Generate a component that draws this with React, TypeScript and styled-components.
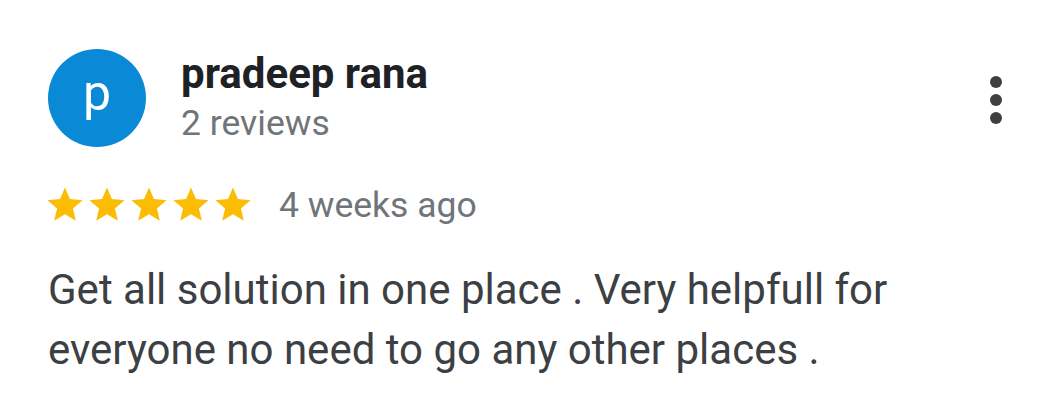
import React, { FC } from 'react';
import styled, { createGlobalStyle } from 'styled-components';

const GlobalStyle = createGlobalStyle`
  html, body {
    margin: 0;
    padding: 0;
    background: #ffffff;
  }
  body {
    font-family: Roboto, 'Noto Sans', Arial, sans-serif;
  }
`;

const Star: FC = () => (
  <svg width="42" height="42" viewBox="0 0 24 24">
    <path
      fill="#fbbc04"
      d="M12 17.27L18.18 21l-1.64-7.03L22 9.24l-7.19-.61L12 2 9.19 8.63 2 9.24l5.46 4.73L5.82 21z"
    />
  </svg>
);

const App: FC = () => {
  return (
    <Card>
      <GlobalStyle />
      <Header>
        <Avatar>p</Avatar>
        <Author>
          <Name>pradeep rana</Name>
          <Meta>2 reviews</Meta>
        </Author>
        <MoreButton aria-label="more">
          <Dot />
          <Dot />
          <Dot />
        </MoreButton>
      </Header>

      <RatingRow>
        <Stars>
          {[0, 1, 2, 3, 4].map((i) => (
            <Star key={i} />
          ))}
        </Stars>
        <Meta>4 weeks ago</Meta>
      </RatingRow>

      <Body>
        Get all solution in one place . Very helpfull for everyone no need to go any other places .
      </Body>
    </Card>
  );
};

export default App;

const Card = styled.div`
  width: 1060px;
  height: 419px;
  box-sizing: border-box;
  padding: 49px 0 0 48px;
  background: #fff;
`;

const Header = styled.div`
  display: flex;
  align-items: flex-start;
`;

const Avatar = styled.div`
  width: 98px;
  height: 98px;
  border-radius: 50%;
  background: #0a8ad6;
  color: #fff;
  font-size: 50px;
  display: flex;
  align-items: center;
  justify-content: center;
  padding-bottom: 10px;
  box-sizing: border-box;
  flex-shrink: 0;
`;

const Author = styled.div`
  margin-left: 35px;
  flex: 1;
  display: flex;
  flex-direction: column;
  padding-top: 1px;
`;

const Name = styled.div`
  font-size: 42px;
  font-weight: 700;
  color: #202124;
  line-height: 48px;
`;

const Meta = styled.div`
  font-size: 35.5px;
  color: #70757a;
  line-height: 50px;
`;

const MoreButton = styled.div`
  display: flex;
  flex-direction: column;
  align-items: center;
  gap: 6px;
  margin-top: 27px;
  margin-right: 58px;
`;

const Dot = styled.span`
  width: 12px;
  height: 12px;
  border-radius: 50%;
  background: #3c4043;
`;

const RatingRow = styled.div`
  display: flex;
  align-items: center;
  gap: 25px;
  margin-top: 32px;
`;

const Stars = styled.div`
  display: flex;
  margin-left: -4px;
`;

const Body = styled.p`
  margin: 30px 0 0;
  width: 900px;
  font-size: 42px;
  line-height: 60px;
  color: #3c4043;
`;
